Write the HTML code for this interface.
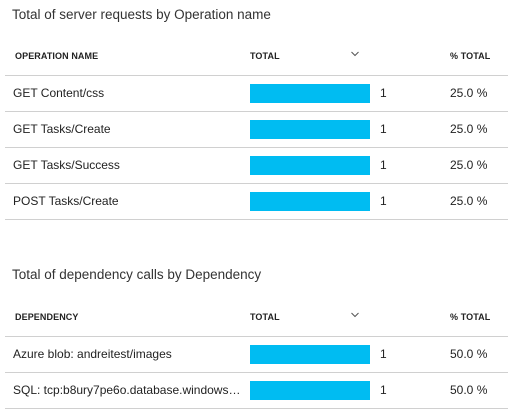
<!DOCTYPE html>
<html><head><style>
body{margin:0;width:508px;height:417px;background:#fff;font-family:"Liberation Sans",sans-serif;color:#222;position:relative;overflow:hidden}
.t{position:absolute;left:12px;font-size:13.5px;color:#333}
.h{position:absolute;font-size:9px;font-weight:bold;color:#222;letter-spacing:0.1px}
.line{position:absolute;left:5px;right:0;height:1px;background:#d0d0d0}
.c{position:absolute;font-size:12px;color:#222}
.bar{position:absolute;left:250px;width:120px;height:19px;background:#00bcf2}
.chev{position:absolute;left:351px;width:8px;height:8px}
</style></head><body>
<div class="t" style="top:7px">Total of server requests by Operation name</div>
<div class="h" style="left:15px;top:51px">OPERATION NAME</div>
<div class="h" style="left:250px;top:51px">TOTAL</div>
<svg class="chev" style="top:50px" viewBox="0 0 8 8"><path d="M0.5 2 L4 5.5 L7.5 2" fill="none" stroke="#555" stroke-width="1"/></svg>
<div class="h" style="left:450px;top:51px">% TOTAL</div>
<div class="line" style="top:75px"></div>
<div class="c" style="left:13px;top:86px">GET Content/css</div><div class="bar" style="top:84px"></div><div class="c" style="left:380px;top:86px">1</div><div class="c" style="left:450px;top:86px">25.0 %</div>
<div class="line" style="top:111px"></div>
<div class="c" style="left:13px;top:122px">GET Tasks/Create</div><div class="bar" style="top:120px"></div><div class="c" style="left:380px;top:122px">1</div><div class="c" style="left:450px;top:122px">25.0 %</div>
<div class="line" style="top:147px"></div>
<div class="c" style="left:13px;top:158px">GET Tasks/Success</div><div class="bar" style="top:156px"></div><div class="c" style="left:380px;top:158px">1</div><div class="c" style="left:450px;top:158px">25.0 %</div>
<div class="line" style="top:183px"></div>
<div class="c" style="left:13px;top:194px">POST Tasks/Create</div><div class="bar" style="top:192px"></div><div class="c" style="left:380px;top:194px">1</div><div class="c" style="left:450px;top:194px">25.0 %</div>
<div class="line" style="top:219px"></div>

<div class="t" style="top:267px">Total of dependency calls by Dependency</div>
<div class="h" style="left:15px;top:312px">DEPENDENCY</div>
<div class="h" style="left:250px;top:312px">TOTAL</div>
<svg class="chev" style="top:311px" viewBox="0 0 8 8"><path d="M0.5 2 L4 5.5 L7.5 2" fill="none" stroke="#555" stroke-width="1"/></svg>
<div class="h" style="left:450px;top:312px">% TOTAL</div>
<div class="line" style="top:336px"></div>
<div class="c" style="left:13px;top:347px">Azure blob: andreitest/images</div><div class="bar" style="top:345px"></div><div class="c" style="left:380px;top:347px">1</div><div class="c" style="left:450px;top:347px">50.0 %</div>
<div class="line" style="top:372px"></div>
<div class="c" style="left:13px;top:383px;width:228px;white-space:nowrap;overflow:hidden;text-overflow:ellipsis">SQL: tcp:b8ury7pe6o.database.windows.net</div><div class="bar" style="top:381px"></div><div class="c" style="left:380px;top:383px">1</div><div class="c" style="left:450px;top:383px">50.0 %</div>
<div class="line" style="top:408px"></div>
</body></html>
